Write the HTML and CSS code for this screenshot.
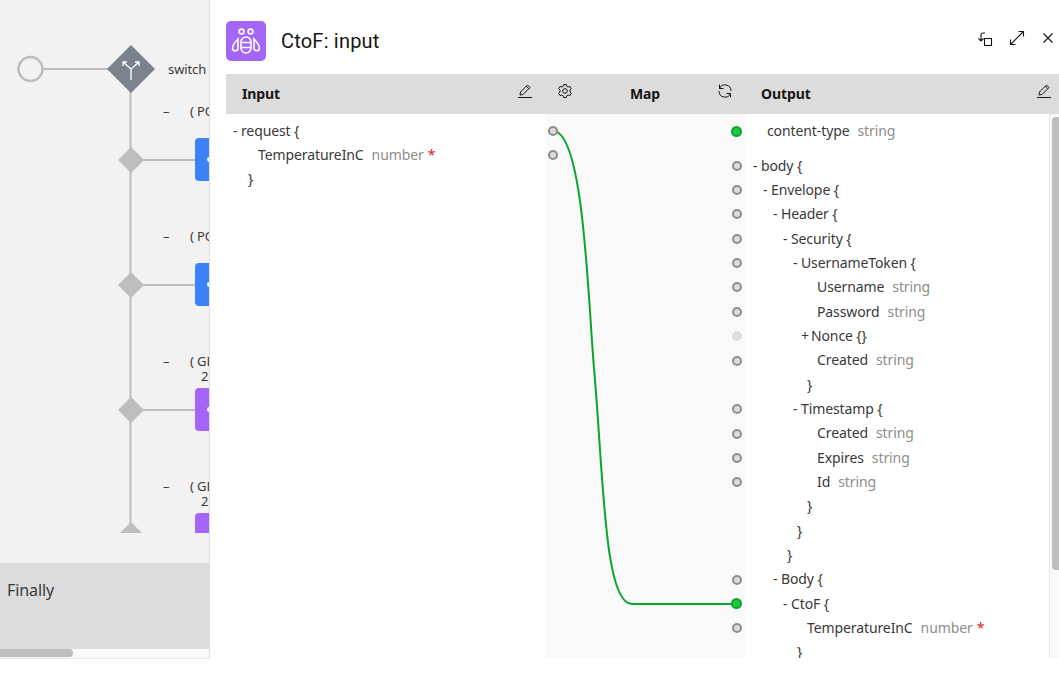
FILE: index.html
```html
<!DOCTYPE html>
<html lang="en">
<head>
	<meta charset="UTF-8">
	<link rel="stylesheet" href="styles.css">
	<title>CtoF: input</title>
</head>
<body>
	<div class="app">
		<div class="flow-pane">
			<div class="canvas">
				<!-- diagram nodes sit on a free canvas -->
				<svg class="wires" width="210" height="533" viewBox="0 0 210 533">
					<path d="M43 69H110M130.500 90V524M131 160H195M131 285H195M131 410H195" fill="none" stroke="#bdbdbd" stroke-width="2"/>
					<circle cx="30.500" cy="69" r="12" fill="none" stroke="#bdbdbd" stroke-width="2.500"/>
					<path d="M131 45 155 69 131 93 107 69Z" fill="#7a828e"/>
					<path d="M131 80V69L123 62M131 69 139 62M123 66V62H127M139 66V62H135" fill="none" stroke="#fff" stroke-width="1.300"/>
					<path d="M131 147 144 160 131 173 118 160Z" fill="#bdbdbd"/>
					<path d="M131 272 144 285 131 298 118 285Z" fill="#bdbdbd"/>
					<path d="M131 397 144 410 131 423 118 410Z" fill="#bdbdbd"/>
					<path d="M131 522 142 533H120Z" fill="#bdbdbd"/>
				</svg>
				<span class="node-text at-switch">switch</span>
				<span class="node-text at-dash1">–</span><span class="node-text at-lab1">( POST</span>
				<span class="node-text at-dash2">–</span><span class="node-text at-lab2">( POST</span>
				<span class="node-text at-dash3">–</span><span class="node-text at-lab3">( GET</span><span class="node-text at-num3">2</span>
				<span class="node-text at-dash4">–</span><span class="node-text at-lab4">( GET</span><span class="node-text at-num4">2</span>
				<div class="card blue at-card1"><i></i></div>
				<div class="card blue at-card2"><i></i></div>
				<div class="card purple at-card3"><i></i></div>
				<div class="card purple at-card4"></div>
			</div>
			<div class="finally">Finally</div>
			<div class="hscroll"><div class="hthumb"></div></div>
		</div>

		<div class="drawer">
			<div class="drawer-top">
				<div class="bee">
					<svg width="40" height="40" viewBox="0 0 40 40" fill="none" stroke="#fff" stroke-width="1.600">
						<circle cx="15.500" cy="10.500" r="2.400"/>
						<circle cx="24.500" cy="10.500" r="2.400"/>
						<rect x="15" y="16" width="10" height="16" rx="5"/>
						<path d="M15 21.500H25M15 26.500H25"/>
						<path d="M12 18C9 21 6.500 24 6.500 27.500A2.800 2.800 0 0 0 12 27.500Z"/>
						<path d="M28 18C31 21 33.500 24 33.500 27.500A2.800 2.800 0 0 1 28 27.500Z"/>
					</svg>
				</div>
				<h1 class="title">CtoF: input</h1>
				<div class="win-icons">
					<svg width="16" height="16" viewBox="0 0 16 16" fill="none" stroke="#161616" stroke-width="1.100"><rect x="6.500" y="8.500" width="7" height="7"/><path d="M7 3H5Q3 3 3 5V11M.5 8.500 3 11 5.500 8.500"/></svg>
					<svg width="16" height="16" viewBox="0 0 16 16" fill="none" stroke="#161616" stroke-width="1.100"><path d="M1.500 14.500 14.500 1.500M9.500 1.500H14.500V6.500M1.500 9.500V14.500H6.500"/></svg>
					<svg width="16" height="16" viewBox="0 0 16 16" fill="none" stroke="#161616" stroke-width="1.100"><path d="M3.500 3.500 12.500 12.500M12.500 3.500 3.500 12.500"/></svg>
				</div>
			</div>

			<div class="mapper">
				<div class="col-head">
					<b>Input</b>
					<svg class="pencil" width="16" height="16" viewBox="0 0 16 16" fill="none" stroke="#161616"><path d="M1 14.500H15M3 12 3.500 9 10.500 2 13 4.500 6 11.500Z M9.300 3.200 11.800 5.700"/></svg>
				</div>
				<div class="col-head map-head">
					<svg width="16" height="16" viewBox="0 0 16 16" fill="none" stroke="#161616"><circle cx="8" cy="8" r="2.300"/><path d="M6.700 1.500H9.300L9.800 3.300 11.200 4 13 3.400 14.300 5.700 13 7V9L14.300 10.300 13 12.600 11.200 12 9.800 12.700 9.300 14.500H6.700L6.200 12.700 4.800 12 3 12.600 1.700 10.300 3 9V7L1.700 5.700 3 3.400 4.800 4 6.200 3.300Z"/></svg>
					<b>Map</b>
					<svg width="16" height="16" viewBox="0 0 16 16" fill="none" stroke="#161616"><path d="M2.500 1.500V5.500H6.500M2.500 5.500A6 6 0 0 1 14 8M13.500 14.500V10.500H9.500M13.500 10.500A6 6 0 0 1 2 8"/></svg>
				</div>
				<div class="col-head out-head">
					<b>Output</b>
					<svg class="pencil" width="16" height="16" viewBox="0 0 16 16" fill="none" stroke="#161616"><path d="M1 14.500H15M3 12 3.500 9 10.500 2 13 4.500 6 11.500Z M9.300 3.200 11.800 5.700"/></svg>
				</div>

				<div class="tree short">
					<div class="row p7">- request {</div>
					<div class="row p32">TemperatureInC<span class="type">number</span><span class="req">*</span></div>
					<div class="row p22">}</div>
				</div>

				<div class="map-col">
					<svg class="link" width="200" height="544" viewBox="545 114 200 544">
						<path d="M553 131C584 131 588 300 594 368C603.600 477 604 604 632 604H737" fill="none" stroke="#0aa52d" stroke-width="2"/>
					</svg>
					<div class="dots short">
						<div class="slot"><i class="dot"></i></div>
						<div class="slot"><i class="dot"></i></div>
					</div>
					<div class="dots">
						<div class="slot"><i class="dot on"></i></div>
						<div class="slot gap"><i class="dot"></i></div>
						<div class="slot"><i class="dot"></i></div>
						<div class="slot"><i class="dot"></i></div>
						<div class="slot"><i class="dot"></i></div>
						<div class="slot"><i class="dot"></i></div>
						<div class="slot"><i class="dot"></i></div>
						<div class="slot"><i class="dot"></i></div>
						<div class="slot"><i class="dot off"></i></div>
						<div class="slot"><i class="dot"></i></div>
						<div class="slot"></div>
						<div class="slot"><i class="dot"></i></div>
						<div class="slot"><i class="dot"></i></div>
						<div class="slot"><i class="dot"></i></div>
						<div class="slot"><i class="dot"></i></div>
						<div class="slot"></div>
						<div class="slot"></div>
						<div class="slot"></div>
						<div class="slot"><i class="dot"></i></div>
						<div class="slot"><i class="dot on"></i></div>
						<div class="slot"><i class="dot"></i></div>
					</div>
				</div>

				<div class="out-col">
					<div class="tree">
						<div class="row p22">content-type<span class="type">string</span></div>
						<div class="row gap p8">- body {</div>
						<div class="row p18">- Envelope {</div>
						<div class="row p28">- Header {</div>
						<div class="row p38">- Security {</div>
						<div class="row p48">- UsernameToken {</div>
						<div class="row p72">Username<span class="type">string</span></div>
						<div class="row p72">Password<span class="type">string</span></div>
						<div class="row p56"><span class="plus">+</span>Nonce {}</div>
						<div class="row p72">Created<span class="type">string</span></div>
						<div class="row p62">}</div>
						<div class="row p48">- Timestamp {</div>
						<div class="row p72">Created<span class="type">string</span></div>
						<div class="row p72">Expires<span class="type">string</span></div>
						<div class="row p72">Id<span class="type">string</span></div>
						<div class="row p62">}</div>
						<div class="row p52">}</div>
						<div class="row p42">}</div>
						<div class="row p28">- Body {</div>
						<div class="row p38">- CtoF {</div>
						<div class="row p62">TemperatureInC<span class="type">number</span><span class="req">*</span></div>
						<div class="row p52">}</div>
					</div>
					<div class="vscroll"><div class="vthumb"></div></div>
				</div>
			</div>
		</div>
	</div>
</body>
</html>
```

FILE: styles.css
```css
body {
	margin: 0;
	background: #fff;
	color: #393939;
	font-family: "Noto Sans", "Liberation Sans", sans-serif;
	font-size: 14px;
	letter-spacing: -0.1px;
}
.app {
	display: flex;
	height: 659px;
	overflow: hidden;
}

/* left pane */
.flow-pane {
	width: 210px;
	flex: none;
	display: flex;
	flex-direction: column;
	background: #f2f2f2;
	border-right: 1px solid #dcdcdc;
	border-bottom: 1px solid #e6e6e6;
	box-sizing: border-box;
}
.canvas {
	position: relative;
	height: 563px;
	overflow: hidden;
}
.wires {
	position: absolute;
	left: 0;
	top: 0;
}
.node-text {
	position: absolute;
	white-space: nowrap;
	font-size: 13px;
	line-height: 15px;
}
.at-switch { left: 168px; top: 62px; }
.at-dash1 { left: 163px; top: 104px; }
.at-lab1 { left: 190px; top: 104px; }
.at-dash2 { left: 163px; top: 229px; }
.at-lab2 { left: 190px; top: 229px; }
.at-dash3 { left: 163px; top: 354px; }
.at-lab3 { left: 190px; top: 354px; }
.at-num3 { left: 201px; top: 369px; }
.at-dash4 { left: 163px; top: 479px; }
.at-lab4 { left: 190px; top: 479px; }
.at-num4 { left: 201px; top: 494px; }
.card {
	position: absolute;
	left: 195px;
	width: 30px;
	height: 43px;
	border-radius: 4px;
}
.card i {
	position: absolute;
	left: 12px;
	top: 19px;
	width: 5px;
	height: 5px;
	background: #fff;
	border-radius: 50%;
}
.blue { background: #3b82fb; }
.purple { background: #a366f9; }
.at-card1 { top: 138px; }
.at-card2 { top: 263px; }
.at-card3 { top: 388px; }
.at-card4 { top: 513px; height: 20px; border-radius: 4px 4px 0 0; }
.finally {
	height: 86px;
	background: #dcdcdc;
	padding: 17px 7px 0;
	box-sizing: border-box;
	font-size: 16px;
	line-height: 20px;
}
.hscroll {
	height: 9px;
	background: #f9f9f9;
}
.hthumb {
	width: 73px;
	height: 8px;
	background: #bdbdbd;
	border-radius: 0 4px 4px 0;
}

/* drawer */
.drawer {
	flex: 1;
	min-width: 0;
	padding-left: 16px;
	background: #fff;
}
.drawer-top {
	display: flex;
	align-items: center;
	height: 74px;
	padding-top: 8px;
	box-sizing: border-box;
}
.bee {
	width: 40px;
	height: 40px;
	background: #a366f9;
	border-radius: 5px;
}
.title {
	margin: 0 0 0 15px;
	font-family: Roboto, sans-serif;
	font-size: 20px;
	font-weight: 400;
	letter-spacing: 0.2px;
	color: #161616;
}
.win-icons {
	margin-left: auto;
	display: flex;
	gap: 15px;
	padding-right: 3px;
	margin-top: -6px;
}
.mapper {
	display: grid;
	grid-template-columns: 319px 200px 314px;
	grid-template-rows: 40px 544px;
}
.col-head {
	display: flex;
	align-items: center;
	justify-content: space-between;
	background: #dcdcdc;
	padding: 0 12px 2px 16px;
	box-sizing: border-box;
	color: #161616;
}
.col-head svg {
	margin-top: -4px;
}
.map-head {
	padding: 0 12px 2px;
}
.out-head {
	padding: 0 7px 2px 16px;
}
.tree {
	padding-top: 5px;
	overflow: hidden;
}
.row {
	height: 24.350px;
	line-height: 24px;
	white-space: nowrap;
}
.short .row,
.short .slot {
	height: 24px;
}
.type {
	margin-left: 8px;
	color: #8d8d8d;
}
.req {
	margin-left: 4px;
	color: #da1e28;
}
.plus {
	margin-right: 2px;
}
.gap {
	margin-top: 10.250px;
}
.p7 { padding-left: 7px; }
.p8 { padding-left: 8px; }
.p18 { padding-left: 18px; }
.p22 { padding-left: 22px; }
.p28 { padding-left: 28px; }
.p32 { padding-left: 32px; }
.p38 { padding-left: 38px; }
.p42 { padding-left: 42px; }
.p48 { padding-left: 48px; }
.p52 { padding-left: 52px; }
.p56 { padding-left: 56px; }
.p62 { padding-left: 62px; }
.p72 { padding-left: 72px; }

/* map column */
.map-col {
	position: relative;
	display: flex;
	justify-content: space-between;
	padding: 5px 3px 0;
	background: #f9f9f9;
	overflow: hidden;
}
.link {
	position: absolute;
	left: 0;
	top: 0;
}
.dots {
	position: relative;
}
.slot {
	height: 24.350px;
	display: flex;
	align-items: center;
}
.dot {
	display: block;
	width: 6px;
	height: 6px;
	border: 2px solid #8d8d8d;
	border-radius: 50%;
	background: #dcdcdc;
}
.dot.on {
	width: 7px;
	height: 7px;
	margin-left: -1px;
	background: #24c93f;
	border-color: #0aa52d;
}
.dot.off {
	background: #dcdcdc;
	border-color: #dcdcdc;
}

/* output column with its own scrollbar */
.out-col {
	display: flex;
	justify-content: space-between;
	overflow: hidden;
}
.out-col .tree {
	flex: 1;
}
.vscroll {
	width: 10px;
	flex: none;
	padding-left: 2px;
	background: #f9f9f9;
	border-left: 1px solid #e6e6e6;
	box-sizing: border-box;
}
.vthumb {
	height: 453px;
	margin-top: 3px;
	background: #bdbdbd;
	border-radius: 4px 0 0 4px;
}
```
